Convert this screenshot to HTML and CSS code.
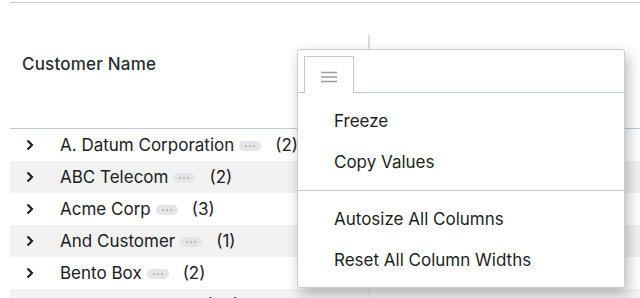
FILE: index.html
```html
<!DOCTYPE html>
<html>
<head>
<meta charset="utf-8">
<link rel="stylesheet" href="styles.css">
</head>
<body>
<div class="grid">
  <div class="header">
    <div class="hcell"><span class="htext">Customer Name</span></div>
    <div class="resize"></div>
    <div class="hcell2"></div>
  </div>
  <div class="rows">
    <div class="row">
      <div class="cell"><svg class="chev" width="8" height="12" viewBox="0 0 8 12"><polyline points="1.5,1.5 6,6 1.5,10.5" fill="none" stroke="#1f2326" stroke-width="2.2"/></svg><span class="name">A. Datum Corporation</span><span class="pill"><i></i><i></i><i></i></span><span class="cnt">(2)</span></div>
      <div class="cell2"></div>
    </div>
    <div class="row alt">
      <div class="cell"><svg class="chev" width="8" height="12" viewBox="0 0 8 12"><polyline points="1.5,1.5 6,6 1.5,10.5" fill="none" stroke="#1f2326" stroke-width="2.2"/></svg><span class="name">ABC Telecom</span><span class="pill"><i></i><i></i><i></i></span><span class="cnt">(2)</span></div>
      <div class="cell2"></div>
    </div>
    <div class="row">
      <div class="cell"><svg class="chev" width="8" height="12" viewBox="0 0 8 12"><polyline points="1.5,1.5 6,6 1.5,10.5" fill="none" stroke="#1f2326" stroke-width="2.2"/></svg><span class="name">Acme Corp</span><span class="pill"><i></i><i></i><i></i></span><span class="cnt">(3)</span></div>
      <div class="cell2"></div>
    </div>
    <div class="row alt">
      <div class="cell"><svg class="chev" width="8" height="12" viewBox="0 0 8 12"><polyline points="1.5,1.5 6,6 1.5,10.5" fill="none" stroke="#1f2326" stroke-width="2.2"/></svg><span class="name">And Customer</span><span class="pill"><i></i><i></i><i></i></span><span class="cnt">(1)</span></div>
      <div class="cell2"></div>
    </div>
    <div class="row">
      <div class="cell"><svg class="chev" width="8" height="12" viewBox="0 0 8 12"><polyline points="1.5,1.5 6,6 1.5,10.5" fill="none" stroke="#1f2326" stroke-width="2.2"/></svg><span class="name">Bento Box</span><span class="pill"><i></i><i></i><i></i></span><span class="cnt">(2)</span></div>
      <div class="cell2"></div>
    </div>
    <div class="row alt">
      <div class="cell"><svg class="chev" width="8" height="12" viewBox="0 0 8 12"><polyline points="1.5,1.5 6,6 1.5,10.5" fill="none" stroke="#1f2326" stroke-width="2.2"/></svg><span class="name">Bennett Labs</span><span class="pill"><i></i><i></i><i></i></span><span class="cnt">(26)</span></div>
      <div class="cell2"></div>
    </div>
  </div>

  <div class="menu">
    <div class="tabbar">
      <div class="tab">
        <svg width="16" height="12" viewBox="0 0 16 12"><path d="M0 1.5H16M0 6H16M0 10.5H16" stroke="#999b9d" stroke-width="1.6"/></svg>
      </div>
    </div>
    <div class="items">
      <div class="item">Freeze</div>
      <div class="item">Copy Values</div>
      <div class="sep"></div>
      <div class="item">Autosize All Columns</div>
      <div class="item">Reset All Column Widths</div>
    </div>
  </div>
</div>
</body>
</html>
```

FILE: styles.css
```css
html, body {
  margin: 0;
  padding: 0;
  background: #ffffff;
  overflow: hidden;
}
body {
  font-family: Inter, "Noto Sans", sans-serif;
  color: #1c2024;
  width: 640px;
  height: 298px;
}
.grid {
  position: relative;
  margin-top: 2px;
  margin-left: 10px;
  border-top: 1px solid #c3c8ce;
}
.header {
  height: 125px;
  display: flex;
  align-items: center;
  border-bottom: 1px solid #c3c8ce;
}
.hcell {
  width: 358px;
  padding-left: 12px;
  padding-bottom: 3px;
  box-sizing: border-box;
  font-size: 17px;
  font-weight: 500;
  letter-spacing: 0.2px;
  color: #2a2e32;
}
.resize {
  width: 2px;
  height: 63px;
  margin-top: 2px;
  background: #dde0e3;
}
.hcell2 {
  flex: 1;
}
.row {
  height: 32px;
  display: flex;
  align-items: stretch;
}
.row.alt {
  background: #f1f2f1;
}
.cell {
  width: 359px;
  display: flex;
  align-items: center;
  padding-left: 16px;
  box-sizing: border-box;
  font-size: 17px;
  white-space: nowrap;
}
.cell2 {
  flex: 1;
  border-left: 1px solid #dde0e3;
}
.chev {
  flex: none;
  margin-right: 26px;
}
.pill {
  display: inline-flex;
  align-items: center;
  justify-content: center;
  gap: 2px;
  width: 22px;
  height: 10px;
  border-radius: 5px;
  background: #e4e5e6;
  margin-left: 5px;
  margin-right: 14px;
  margin-top: 2px;
}
.pill i {
  width: 2px;
  height: 2px;
  border-radius: 1px;
  background: #a9abae;
}
.menu {
  position: absolute;
  left: 287px;
  top: 46px;
  width: 328px;
  height: 239px;
  box-sizing: border-box;
  background: #ffffff;
  border: 1px solid #c8ccd0;
  border-radius: 3px;
  box-shadow: 3px 6px 14px rgba(0, 0, 0, 0.28);
}
.tabbar {
  height: 43px;
  box-sizing: border-box;
  padding: 6px 0 0 6px;
  border-bottom: 1px solid #c3c8ce;
  display: flex;
}
.tab {
  width: 50px;
  height: 37px;
  box-sizing: border-box;
  border: 1px solid #c3c8ce;
  border-bottom: none;
  background: #fff;
  display: flex;
  align-items: center;
  justify-content: center;
  padding-top: 3px;
}
.items {
  padding: 7px 0 6px;
}
.item {
  height: 41px;
  display: flex;
  align-items: center;
  padding-left: 36px;
  font-size: 17px;
  color: #1c1f22;
}
.sep {
  height: 1px;
  background: #c3c8ce;
  margin: 8px 0 7px;
}
```
